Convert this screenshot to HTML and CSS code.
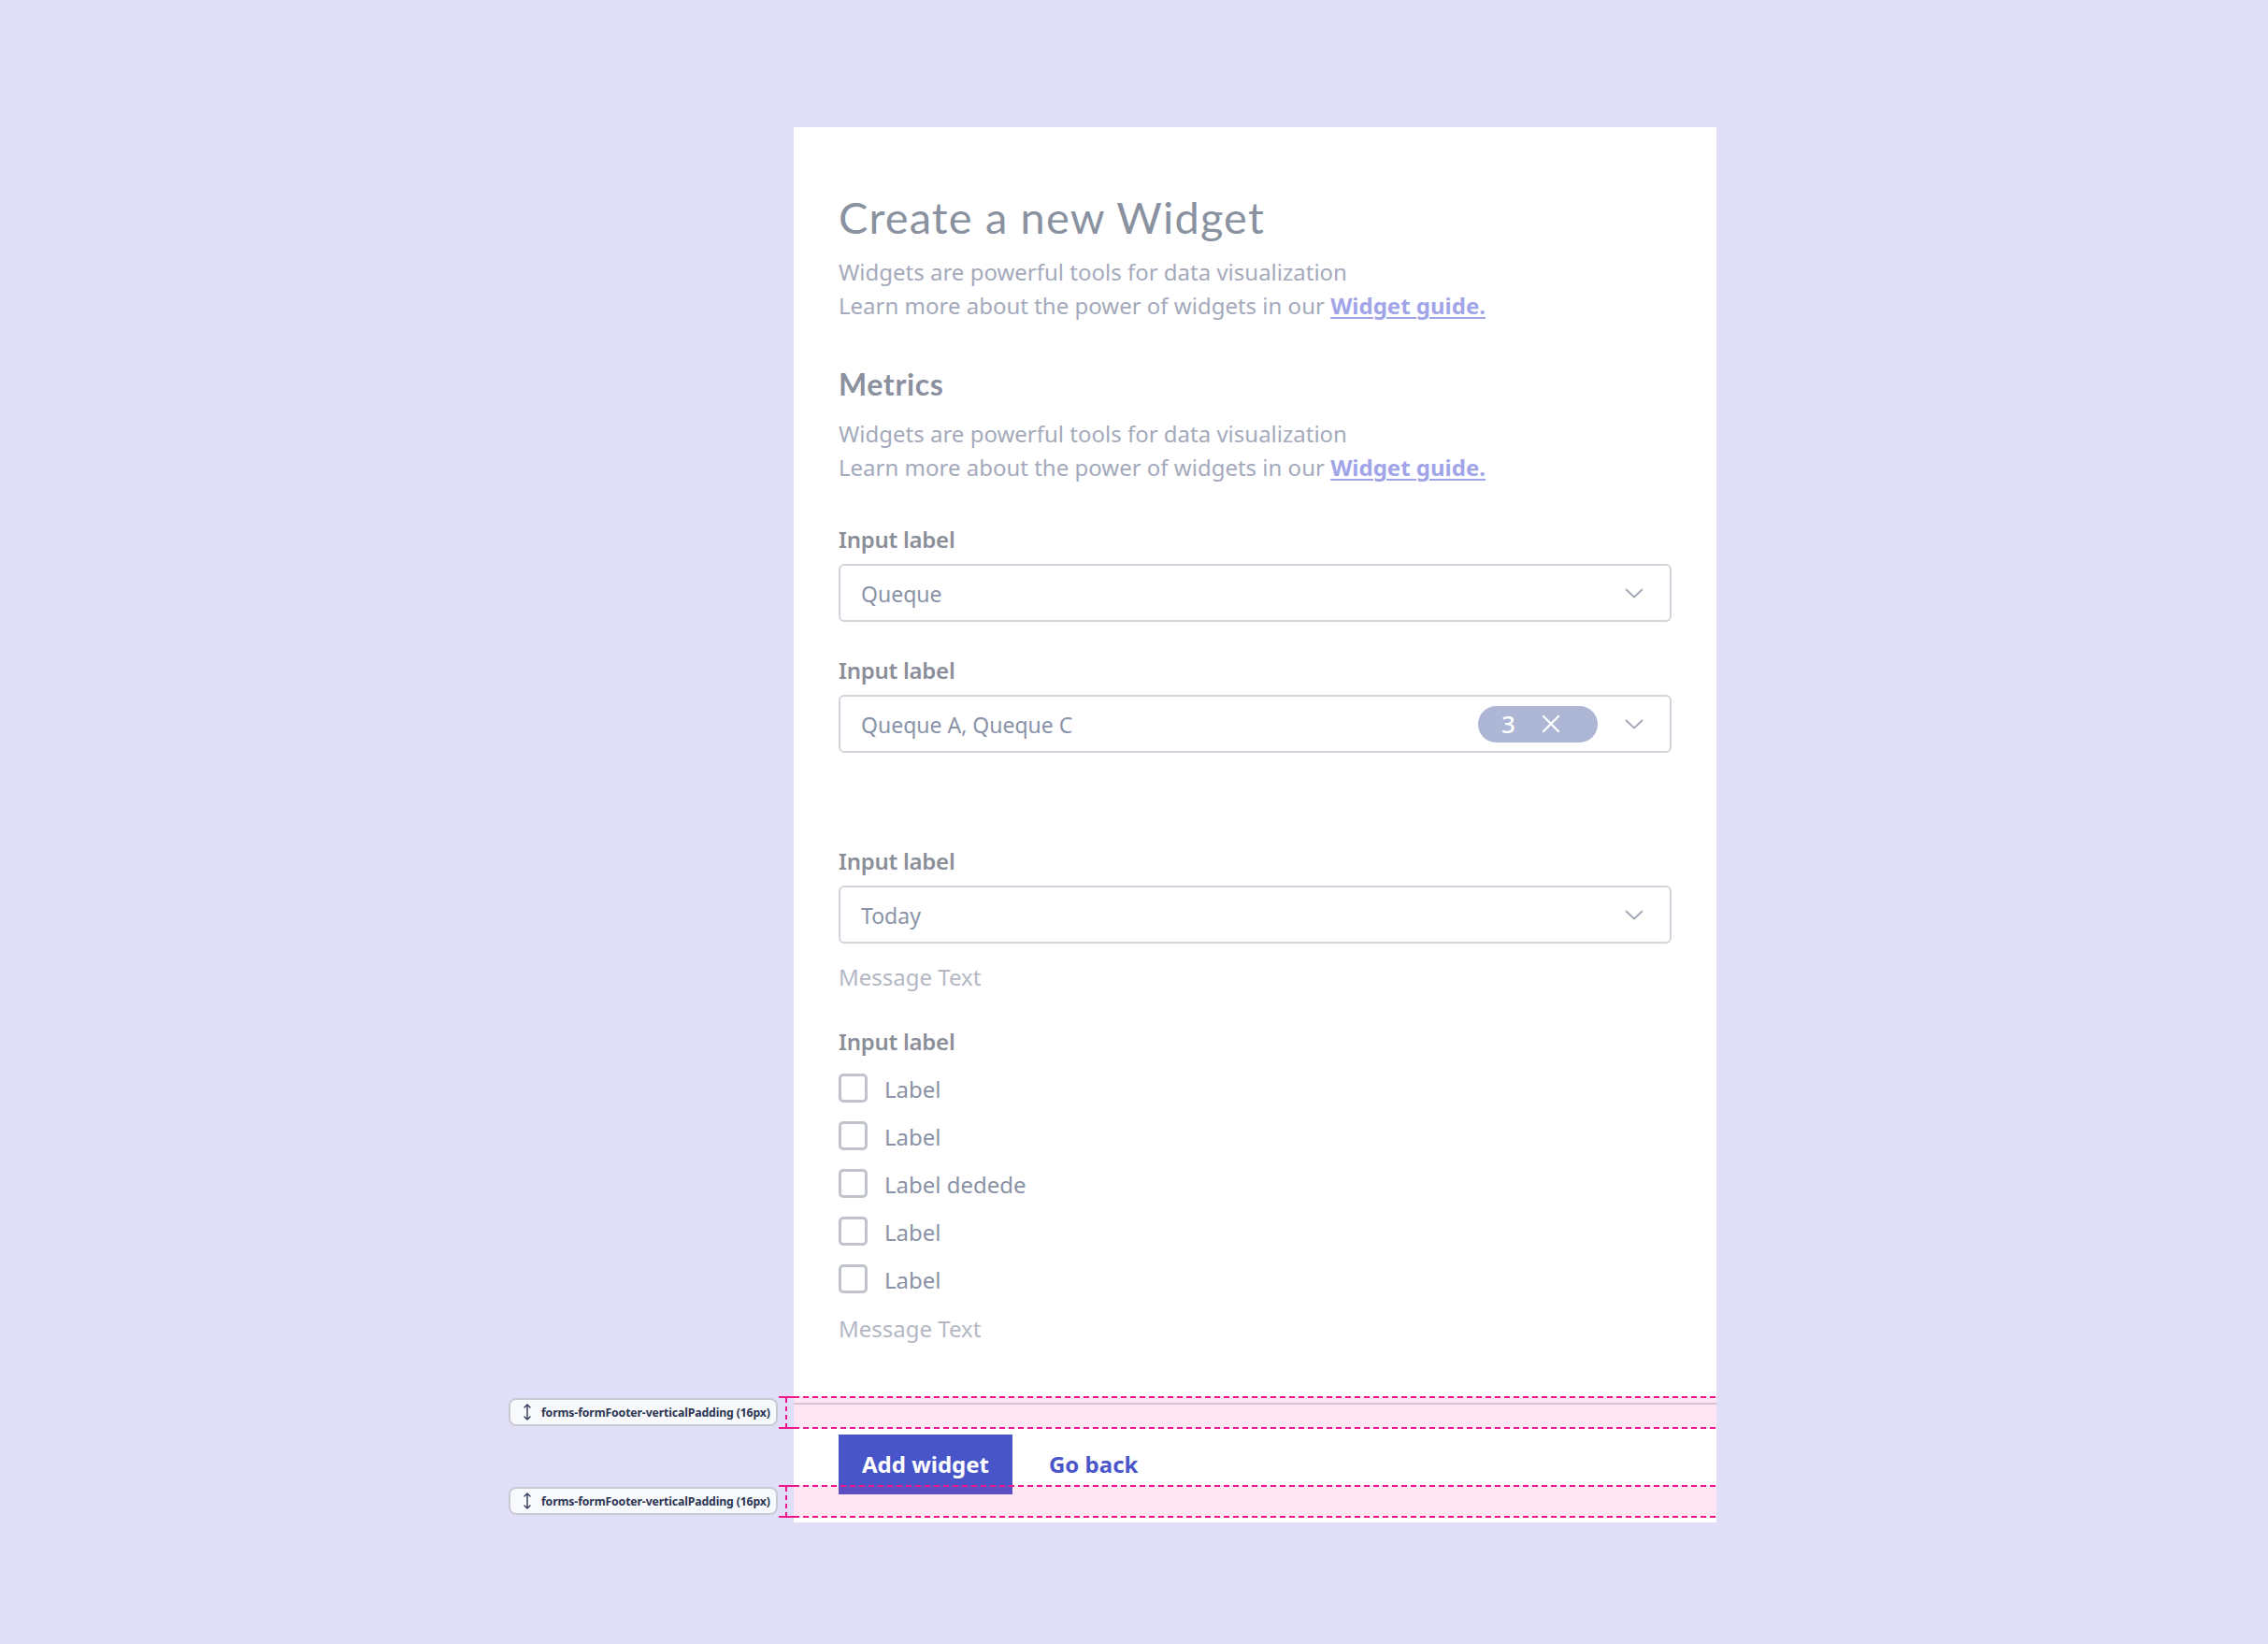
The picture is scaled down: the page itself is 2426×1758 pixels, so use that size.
FILE: index.html
```html
<!DOCTYPE html>
<html lang="en">
<head>
<meta charset="utf-8">
<title>Create a new Widget</title>
<link rel="stylesheet" href="styles.css">
</head>
<body>
<div class="page">
  <div class="card">
    <h1 class="title">Create a new Widget</h1>
    <p class="desc">Widgets are powerful tools for data visualization<br>Learn more about the power of widgets in our <a class="link" href="#">Widget guide.</a></p>

    <h2 class="section">Metrics</h2>
    <p class="desc">Widgets are powerful tools for data visualization<br>Learn more about the power of widgets in our <a class="link" href="#">Widget guide.</a></p>

    <div class="field field-first">
      <div class="label">Input label</div>
      <div class="select">
        <span class="value">Queque</span>
        <svg class="chev" width="20" height="11" viewBox="0 0 20 11"><polyline points="1,1 10,9.5 19,1" fill="none" stroke="#a2a7b6" stroke-width="1.8"/></svg>
      </div>
    </div>

    <div class="field">
      <div class="label">Input label</div>
      <div class="select">
        <span class="value">Queque A, Queque C</span>
        <span class="badge"><span class="badge-num">3</span><svg width="20" height="20" viewBox="0 0 20 20"><path d="M2 2 L18 18 M18 2 L2 18" stroke="#fff" stroke-width="2.4" stroke-linecap="round"/></svg></span>
        <svg class="chev" width="20" height="11" viewBox="0 0 20 11"><polyline points="1,1 10,9.5 19,1" fill="none" stroke="#a2a7b6" stroke-width="1.8"/></svg>
      </div>
    </div>

    <div class="field field-far">
      <div class="label">Input label</div>
      <div class="select">
        <span class="value">Today</span>
        <svg class="chev" width="20" height="11" viewBox="0 0 20 11"><polyline points="1,1 10,9.5 19,1" fill="none" stroke="#a2a7b6" stroke-width="1.8"/></svg>
      </div>
      <div class="message">Message Text</div>
    </div>

    <div class="field field-checks">
      <div class="label">Input label</div>
      <div class="checks">
        <label class="check"><span class="box"></span><span class="check-text">Label</span></label>
        <label class="check"><span class="box"></span><span class="check-text">Label</span></label>
        <label class="check"><span class="box"></span><span class="check-text">Label dedede</span></label>
        <label class="check"><span class="box"></span><span class="check-text">Label</span></label>
        <label class="check"><span class="box"></span><span class="check-text">Label</span></label>
      </div>
      <div class="message message-checks">Message Text</div>
    </div>

    <div class="footer">
      <button class="btn-primary">Add widget</button>
      <a class="btn-link" href="#">Go back</a>
    </div>
  </div>

  <div class="spacing spacing-top">
    <div class="tag"><svg width="10" height="20" viewBox="0 0 10 20"><path d="M5 2 V18 M2 5 L5 2 L8 5 M2 15 L5 18 L8 15" fill="none" stroke="#3b4562" stroke-width="1.5" stroke-linecap="round" stroke-linejoin="round"/></svg><span>forms-formFooter-verticalPadding (16px)</span></div>
    <div class="bracket"></div>
    <div class="band"></div>
  </div>
  <div class="spacing spacing-bottom">
    <div class="tag"><svg width="10" height="20" viewBox="0 0 10 20"><path d="M5 2 V18 M2 5 L5 2 L8 5 M2 15 L5 18 L8 15" fill="none" stroke="#3b4562" stroke-width="1.5" stroke-linecap="round" stroke-linejoin="round"/></svg><span>forms-formFooter-verticalPadding (16px)</span></div>
    <div class="bracket"></div>
    <div class="band"></div>
  </div>
</div>
</body>
</html>
```

FILE: styles.css
```css
* { box-sizing: border-box; }

html, body {
  margin: 0;
  padding: 0;
}

body {
  width: 2426px;
  height: 1758px;
  background: #e1dff7;
  font-family: "Noto Sans", "Open Sans", sans-serif;
  overflow: hidden;
}

.page {
  position: relative;
  width: 2426px;
  height: 1758px;
  padding: 136px 0 0 849px;
}

.card {
  width: 987px;
  height: 1492px;
  background: #ffffff;
  padding: 68px 48px 0;
  display: flex;
  flex-direction: column;
}

.title {
  margin: 0;
  font-family: "Lato", "Noto Sans", sans-serif;
  font-weight: 400;
  font-size: 47px;
  letter-spacing: 1.15px;
  line-height: 56px;
  color: #8a92a1;
}

.desc {
  margin: 13px 0 0;
  font-size: 24px;
  line-height: 36px;
  color: #a4aabb;
}

.link {
  color: #a1a5e8;
  font-weight: 700;
  text-decoration: underline;
  text-decoration-thickness: 2px;
  text-underline-offset: 3px;
}

.section {
  margin: 46px 0 0;
  font-family: "Lato", "Noto Sans", sans-serif;
  font-weight: 700;
  font-size: 32px;
  letter-spacing: 0.6px;
  line-height: 40px;
  color: #8a909e;
}

.section + .desc {
  margin-top: 15px;
}

.field {
  display: flex;
  flex-direction: column;
  margin-top: 36px;
}

.field-first { margin-top: 43px; }
.field-far { margin-top: 100px; }
.field-checks { margin-top: 37px; }

.label {
  font-size: 24px;
  font-weight: 600;
  letter-spacing: -0.25px;
  line-height: 32px;
  color: #8b8e98;
}

.select {
  margin-top: 10px;
  height: 62px;
  border: 2px solid #d3d3db;
  border-radius: 6px;
  display: flex;
  align-items: center;
  padding: 0 28px 0 22px;
}

.value {
  flex: 1;
  font-size: 23px;
  line-height: 32px;
  color: #8a93a8;
  padding-top: 2px;
}

.chev {
  flex: none;
  display: block;
}

.badge {
  display: flex;
  align-items: center;
  gap: 28px;
  height: 39px;
  width: 128px;
  border-radius: 20px;
  background: #adb6d4;
  padding: 0 0 0 25px;
  margin-right: 29px;
}

.badge-num {
  font-size: 26px;
  line-height: 39px;
  color: #ffffff;
  font-weight: 500;
}

.badge svg { display: block; }

.message {
  margin-top: 20px;
  font-size: 24px;
  line-height: 32px;
  color: #b4b8c5;
}

.checks {
  margin-top: 18px;
  display: flex;
  flex-direction: column;
  gap: 20px;
}

.check {
  display: flex;
  align-items: center;
  gap: 18px;
  height: 31px;
}

.box {
  width: 31px;
  height: 31px;
  border: 3px solid #c0c3cc;
  border-radius: 5px;
  flex: none;
}

.check-text {
  font-size: 24px;
  line-height: 31px;
  color: #8a92a6;
  padding-top: 2px;
}

.message-checks {
  margin-top: 22px;
}

.footer {
  margin: auto -48px 0;
  border-top: 2px solid #d6d6de;
  padding: 32px 48px 30px;
  display: flex;
  align-items: center;
  gap: 39px;
}

.btn-primary {
  height: 64px;
  padding: 0 25px;
  border: 0;
  border-radius: 0;
  background: #4755c9;
  color: #ffffff;
  font-family: "Noto Sans", sans-serif;
  font-size: 24px;
  font-weight: 700;
  line-height: 60px;
}

.btn-link {
  font-size: 24px;
  font-weight: 700;
  color: #4a56c9;
  text-decoration: none;
  line-height: 60px;
}

/* spacing annotations (overlay) */
.spacing {
  position: absolute;
  left: 544px;
  width: 1292px;
  height: 35px;
}

.spacing-top { top: 1493px; }
.spacing-bottom { top: 1588px; }

.tag {
  position: absolute;
  left: 0;
  top: 2px;
  width: 288px;
  height: 30px;
  background: #f8f9fd;
  border: 2px solid #c9cad4;
  border-radius: 8px;
  display: flex;
  align-items: center;
  gap: 10px;
  padding-left: 13px;
  font-size: 12.3px;
  font-weight: 700;
  color: #2c3552;
  white-space: nowrap;
  letter-spacing: -0.15px;
}

.tag svg { display: block; flex: none; }

.bracket {
  position: absolute;
  left: 289px;
  top: 0;
  width: 16px;
  height: 35px;
  border-top: 2px solid #f2168c;
  border-bottom: 2px solid #f2168c;
  background: repeating-linear-gradient(180deg, #f2168c 0 5px, transparent 5px 9px) 7px 0 / 2px 100% no-repeat;
}

.band {
  position: absolute;
  left: 305px;
  right: 0;
  top: 0;
  height: 35px;
  background-color: rgba(248, 40, 145, 0.11);
  background-image:
    repeating-linear-gradient(90deg, #f2168c 0 6px, transparent 6px 10px),
    repeating-linear-gradient(90deg, #f2168c 0 6px, transparent 6px 10px);
  background-size: 100% 2px, 100% 2px;
  background-position: 0 0, 0 100%;
  background-repeat: no-repeat;
}
```
